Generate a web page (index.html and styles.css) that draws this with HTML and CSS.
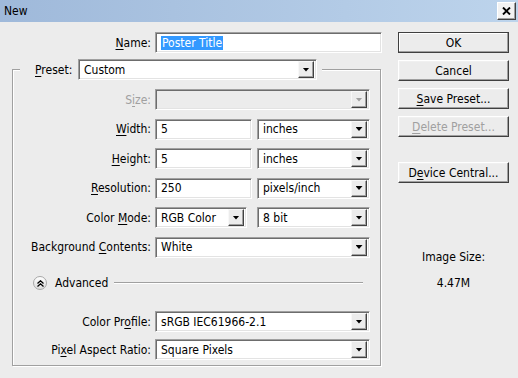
FILE: index.html
```html
<!DOCTYPE html>
<html>
<head>
<meta charset="utf-8">
<link rel="stylesheet" href="styles.css">
</head>
<body>
<div class="window">
  <div class="titlebar">
    <span class="title">New</span>
    <span class="close"><svg width="9" height="8" viewBox="0 0 9 8"><path d="M1 0.5L8 7.5M8 0.5L1 7.5" stroke="#000" stroke-width="1.9" fill="none"/></svg></span>
  </div>
  <div class="content">
    <div class="main">
      <div class="row name-row">
        <label class="lbl"><u>N</u>ame:</label>
        <div class="field name-field"><span class="sel">Poster Title</span></div>
      </div>
      <fieldset class="group">
        <legend class="legend">
          <label class="preset-lbl"><u>P</u>reset:</label>
          <div class="field select preset"><span class="val">Custom</span><span class="arrow"></span></div>
        </legend>
        <div class="rows">
          <div class="row">
            <label class="lbl disabled">S<u>i</u>ze:</label>
            <div class="field select disabled w-full"><span class="val"></span><span class="arrow"></span></div>
          </div>
          <div class="row">
            <label class="lbl"><u>W</u>idth:</label>
            <div class="ctrls">
              <div class="field w-num"><span class="val">5</span></div>
              <div class="field select w-unit"><span class="val">inches</span><span class="arrow"></span></div>
            </div>
          </div>
          <div class="row">
            <label class="lbl"><u>H</u>eight:</label>
            <div class="ctrls">
              <div class="field w-num"><span class="val">5</span></div>
              <div class="field select w-unit"><span class="val">inches</span><span class="arrow"></span></div>
            </div>
          </div>
          <div class="row">
            <label class="lbl"><u>R</u>esolution:</label>
            <div class="ctrls">
              <div class="field w-num"><span class="val">250</span></div>
              <div class="field select w-unit"><span class="val">pixels/inch</span><span class="arrow"></span></div>
            </div>
          </div>
          <div class="row">
            <label class="lbl">Color <u>M</u>ode:</label>
            <div class="ctrls wide-gap">
              <div class="field select w-mode"><span class="val">RGB Color</span><span class="arrow"></span></div>
              <div class="field select w-unit"><span class="val">8 bit</span><span class="arrow"></span></div>
            </div>
          </div>
          <div class="row">
            <label class="lbl">Background <u>C</u>ontents:</label>
            <div class="field select w-full"><span class="val">White</span><span class="arrow"></span></div>
          </div>
          <div class="adv-row">
            <span class="adv-icon"><svg width="7" height="7" viewBox="0 0 7 7"><path d="M0.5 3.5L3.5 0.8L6.5 3.5M0.5 6.5L3.5 3.8L6.5 6.5" stroke="#000" stroke-width="1.3" fill="none"/></svg></span>
            <span class="adv-text">Advanced</span>
            <span class="adv-line"></span>
          </div>
          <div class="row profile-row">
            <label class="lbl">Color Pr<u>o</u>file:</label>
            <div class="field select w-full"><span class="val">sRGB IEC61966-2.1</span><span class="arrow"></span></div>
          </div>
          <div class="row pixel-row">
            <label class="lbl">Pi<u>x</u>el Aspect Ratio:</label>
            <div class="field select w-full"><span class="val">Square Pixels</span><span class="arrow"></span></div>
          </div>
        </div>
      </fieldset>
    </div>
    <div class="side">
      <div class="btn default">OK</div>
      <div class="btn">Cancel</div>
      <div class="btn"><u>S</u>ave Preset...</div>
      <div class="btn disabled"><u>D</u>elete Preset...</div>
      <div class="btn device">D<u>e</u>vice Central...</div>
      <div class="info-label">Image Size:</div>
      <div class="info-value">4.47M</div>
    </div>
  </div>
</div>
</body>
</html>
```
FILE: styles.css
```css
* { box-sizing: border-box; }
html, body { margin: 0; padding: 0; }
body {
  width: 518px;
  height: 378px;
  overflow: hidden;
  background: #ececec;
  font-family: "DejaVu Sans Condensed", Tahoma, "DejaVu Sans", sans-serif;
  font-size: 12px;
  color: #000;
}
u { text-decoration: underline; text-underline-offset: 2px; }

.titlebar {
  height: 22px;
  background: linear-gradient(to right, #9fb9da, #bdd4ec);
  display: flex;
  align-items: center;
  justify-content: space-between;
  padding: 0 2px 0 4px;
}
.close {
  width: 19px;
  height: 18px;
  background: #f2f2f2;
  border: 1px solid;
  border-color: #fff #404040 #404040 #fff;
  box-shadow: inset -1px -1px 0 #a0a0a0;
  display: flex;
  align-items: center;
  justify-content: center;
}

.content { display: flex; padding-top: 10px; }
.main { width: 381px; padding-left: 12px; }
.side {
  width: 111px;
  margin-left: 17px;
  display: flex;
  flex-direction: column;
  gap: 7px;
}

.row {
  display: grid;
  grid-template-columns: 138px auto;
  column-gap: 4px;
  align-items: center;
  height: 21px;
}
.name-row { grid-template-columns: 139px auto; margin-bottom: 6px; }
.lbl { text-align: right; white-space: nowrap; }
.lbl.disabled { color: #a0a0a0; }

.field {
  height: 21px;
  background: #fff;
  border: 1px solid;
  border-color: #a0a0a0 #fff #fff #a0a0a0;
  box-shadow: inset 1px 1px 0 #6d6d6d, inset -1px -1px 0 #e3e3e3;
  display: flex;
  align-items: center;
  padding: 2px 2px 2px 5px;
  white-space: nowrap;
}
.field .val { flex: 1; }
.name-field { width: 227px; }
.sel { background: #3399ff; color: #fff; padding: 0 1px; margin-left: 0; }
.select { padding-right: 2px; }
.select.disabled { background: #ececec; }
.arrow {
  width: 16px;
  height: 17px;
  background: #ececec;
  border: 1px solid;
  border-color: #f8f8f8 #404040 #404040 #f8f8f8;
  box-shadow: inset -1px -1px 0 #a0a0a0;
  display: flex;
  align-items: center;
  justify-content: center;
}
.arrow::after {
  content: "";
  width: 7px;
  height: 4px;
  background: #000;
  clip-path: polygon(0 0, 100% 0, 50% 100%);
}
.select.disabled .arrow::after { background: #a0a0a0; }

.group {
  margin: 0;
  padding: 0 0 5px 0;
  width: 369px;
  border: 1px solid #a0a0a0;
  box-shadow: inset 1px 1px 0 #fff, 1px 1px 0 #fff;
}
.legend {
  display: flex;
  align-items: center;
  margin-left: 7px;
  padding: 0 5px 0 15px;
  background: #ececec;
  height: 21px;
}
.preset-lbl { width: 43px; }
.preset { width: 239px; }

.rows { display: flex; flex-direction: column; gap: 8.5px; padding-top: 9px; }
.ctrls { display: flex; gap: 5px; }
.ctrls.wide-gap { gap: 10px; }
.w-full { width: 215px; }
.w-num { width: 97px; }
.w-unit { width: 113px; }
.w-mode { width: 92px; }

.adv-row {
  display: flex;
  align-items: center;
  height: 21px;
  margin-top: 6.5px;
  padding-left: 20px;
  margin-right: 17px;
}
.adv-icon {
  width: 14px;
  height: 14px;
  border-radius: 50%;
  border: 1px solid #a8a8a8;
  background: linear-gradient(#ffffff, #dcdcdc);
  display: flex;
  align-items: center;
  justify-content: center;
}
.adv-text { margin-left: 8px; }
.adv-line {
  flex: 1;
  margin-left: 6px;
  height: 2px;
  border-top: 1px solid #a0a0a0;
  border-bottom: 1px solid #fff;
}
.profile-row { margin-top: 9px; }
.pixel-row { margin-top: -1.5px; }

.btn {
  height: 21px;
  background: #ececec;
  border: 1px solid;
  border-color: #fff #404040 #404040 #fff;
  box-shadow: inset -1px -1px 0 #a0a0a0, inset 1px 1px 0 #f0f0f0;
  display: flex;
  align-items: center;
  justify-content: center;
  white-space: nowrap;
}
.btn.default { border-color: #404040; box-shadow: inset -1px -1px 0 #a0a0a0, inset 1px 1px 0 #fff; }
.btn.disabled { color: #a0a0a0; }
.btn.device { margin-top: 18px; }
.info-label { margin-top: 60px; text-align: center; line-height: 14px; }
.info-value { margin-top: 5px; text-align: center; line-height: 14px; }
```
